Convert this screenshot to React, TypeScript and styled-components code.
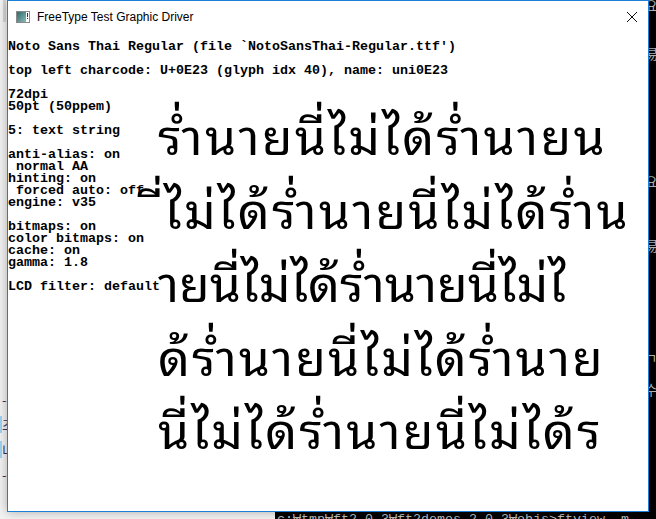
import React from "react";
import styled, { createGlobalStyle } from "styled-components";

const Global = createGlobalStyle`
  html, body { margin: 0; padding: 0; background: #f0f0f0; overflow: hidden; }
  #root { width: 656px; height: 519px; }
`;

const Desktop = styled.div`
  position: relative;
  width: 656px;
  height: 519px;
  overflow: hidden;
  background: #f3f3f3;
`;

const BackApp = styled.div`
  position: absolute;
  left: 0;
  top: 0;
  width: 275px;
  height: 519px;
  background: #f3f3f3;
  display: flex;
  flex-direction: column;
`;

const ScrollStub = styled.div`
  width: 3px;
  height: 22px;
  margin-left: 3px;
  background: #d6d6d6;
`;

const BackList = styled.div`
  margin-top: 369px;
  display: flex;
  flex-direction: column;
  gap: 8px;
  font-family: "Noto Sans CJK KR", sans-serif;
  font-size: 13px;
  line-height: 17px;
  color: #3b2f63;
  white-space: pre;
`;

const BackItem = styled.div<{ $mark?: boolean }>`
  border-left: 2px solid ${(p) => (p.$mark ? "#9fd3f3" : "transparent")};
`;

const Console = styled.div`
  position: absolute;
  left: 275px;
  top: 0;
  right: 0;
  bottom: 0;
  background: #000;
  color: #bdbdbd;
  padding-left: 2px;
  font-family: "Liberation Mono", "Noto Sans CJK KR", monospace;
  font-size: 13.33px;
  line-height: 16px;
  white-space: pre;
`;

const ConsoleLine = styled.div`
  height: 16px;
`;

const Window = styled.div`
  position: absolute;
  left: 7px;
  top: 0;
  width: 642px;
  height: 512px;
  box-sizing: border-box;
  border: 1px solid #1b80d6;
  background: #fff;
  box-shadow: 0 0 10px rgba(0, 0, 0, 0.3);
  display: flex;
  flex-direction: column;
`;

const TitleBar = styled.div`
  height: 31px;
  flex: none;
  display: flex;
  align-items: center;
  padding: 0 10px 0 7px;
`;

const TitleText = styled.div`
  margin-left: 6px;
  flex: 1;
  font-family: "Liberation Sans", "Noto Sans", sans-serif;
  font-size: 12px;
  color: #000;
`;

const Client = styled.div`
  flex: 1;
  padding-top: 9px;
  font-family: "Liberation Mono", "DejaVu Sans Mono", monospace;
  font-weight: bold;
  font-size: 13.33px;
  line-height: 12px;
  color: #000;
  white-space: pre;
`;

const InfoLine = styled.div`
  height: 12px;
`;

const Body = styled.div`
  display: flex;
`;

const InfoColumn = styled.div`
  width: 150px;
  flex: none;
  display: flex;
  flex-direction: column;
`;

const ThaiBlock = styled.div`
  padding-top: 7px;
  font-family: "Noto Sans Thai Looped", "Noto Looped Thai", "Noto Sans Thai", "Noto Sans", sans-serif;
  font-weight: normal;
  font-size: 50px;
  line-height: 73.5px;
  color: #000;
  white-space: pre;
`;

const ThaiLine = styled.div<{ $shift: number; $track: number }>`
  height: 73.5px;
  margin-left: ${(p) => p.$shift}px;
  letter-spacing: ${(p) => p.$track}px;
`;

const AppIcon = () => (
  <svg width="16" height="16" viewBox="0 0 16 16">
    <defs>
      <linearGradient id="ig" x1="0" y1="0" x2="1" y2="1">
        <stop offset="0" stopColor="#2e6a6c" />
        <stop offset="1" stopColor="#8fb9b8" />
      </linearGradient>
    </defs>
    <rect x="1.5" y="2.5" width="13" height="11" fill="#fff" stroke="#8a8a8a" />
    <rect x="2" y="3" width="9" height="10" fill="url(#ig)" />
    <rect x="12" y="4" width="1" height="4" fill="#333" />
    <rect x="12" y="9" width="1" height="1" fill="#333" />
  </svg>
);

const CloseIcon = () => (
  <svg width="12" height="12" viewBox="0 0 12 12">
    <path d="M1 1 L11 11 M11 1 L1 11" stroke="#111" strokeWidth="1" />
  </svg>
);

const header = [
  "Noto Sans Thai Regular (file `NotoSansThai-Regular.ttf')",
  "",
  "top left charcode: U+0E23 (glyph idx 40), name: uni0E23",
  "",
];

const info = [
  "72dpi",
  "50pt (50ppem)",
  "",
  "5: text string",
  "",
  "anti-alias: on",
  " normal AA",
  "hinting: on",
  " forced auto: off",
  "engine: v35",
  "",
  "bitmaps: on",
  "color bitmaps: on",
  "cache: on",
  "gamma: 1.8",
  "",
  "LCD filter: default",
];

const thai = [
  { t: "ร่ำนายนี่ไม่ได้ร่ำนายน", s: 0, k: 2.3 },
  { t: "\u200Bี่ไม่ได้ร่ำนายนี่ไม่ได้ร่ำน", s: 6, k: 2.2 },
  { t: "ายนี่ไม่ได้ร่ำนายนี่ไม่ไ", s: 0, k: 0 },
  { t: "ด้ร่ำนายนี่ไม่ได้ร่ำนาย", s: 0, k: 2.1 },
  { t: "นี่ไม่ได้ร่ำนายนี่ไม่ได้ร", s: 0, k: 2.2 },
];

const pad = " ".repeat(46);
const consoleLines: string[] = Array.from({ length: 33 }, () => "");
consoleLines[0] = pad + "요";
consoleLines[3] = pad + "易";
consoleLines[11] = pad + "요";
consoleLines[15] = pad + "易";
consoleLines[22] = pad + "ㄱ";
consoleLines[24] = pad + "수";
consoleLines[32] = "c:₩tmp₩ft2.0.3₩ft2demos 2.0.3₩objs>ftview  m";

export default function App() {
  return (
    <Desktop>
      <Global />
      <BackApp>
        <ScrollStub />
        <BackList>
          <BackItem>{"-가"}</BackItem>
          <BackItem $mark>{"즈"}</BackItem>
          <BackItem $mark>{"니"}</BackItem>
          <BackItem>{"-금"}</BackItem>
        </BackList>
      </BackApp>
      <Console>
        {consoleLines.map((l, i) => (
          <ConsoleLine key={i}>{l}</ConsoleLine>
        ))}
      </Console>
      <Window>
        <TitleBar>
          <AppIcon />
          <TitleText>FreeType Test Graphic Driver</TitleText>
          <CloseIcon />
        </TitleBar>
        <Client>
          {header.map((l, i) => (
            <InfoLine key={i}>{l}</InfoLine>
          ))}
          <Body>
            <InfoColumn>
              {info.map((l, i) => (
                <InfoLine key={i}>{l}</InfoLine>
              ))}
            </InfoColumn>
            <ThaiBlock>
              {thai.map((l, i) => (
                <ThaiLine key={i} $shift={l.s} $track={l.k}>
                  {l.t}
                </ThaiLine>
              ))}
            </ThaiBlock>
          </Body>
        </Client>
      </Window>
    </Desktop>
  );
}
